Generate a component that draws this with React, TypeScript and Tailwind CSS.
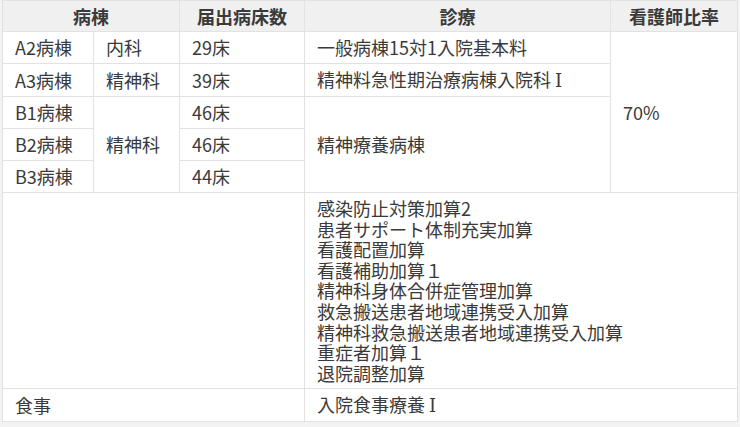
import React from "react";

const td = "border border-[#e2e2e2] px-[12px] py-[5px] align-middle";
const th = "border border-[#e2e2e2] px-[12px] py-0 text-center font-bold bg-[#f0f0f0]";

const additions = [
  "感染防止対策加算2",
  "患者サポート体制充実加算",
  "看護配置加算",
  "看護補助加算１",
  "精神科身体合併症管理加算",
  "救急搬送患者地域連携受入加算",
  "精神科救急搬送患者地域連携受入加算",
  "重症者加算１",
  "退院調整加算",
];

function RomanOne() {
  return (
    <span className="ml-[4px]" style={{ fontFamily: '"DejaVu Serif", "Liberation Serif", serif' }}>
      Ⅰ
    </span>
  );
}

export default function App() {
  return (
    <div
      className="w-[740px] h-[427px] bg-[#f3f3f3] pl-[2px] overflow-hidden text-[#3a3a3a] text-[18px] leading-[21px]"
      style={{ fontFamily: '"Noto Sans CJK JP", "Noto Sans", sans-serif' }}
    >
      <table className="w-[735px] border-collapse bg-white table-fixed">
        <colgroup>
          <col className="w-[91px]" />
          <col className="w-[86px]" />
          <col className="w-[125px]" />
          <col className="w-[306px]" />
          <col className="w-[127px]" />
        </colgroup>
        <thead>
          <tr className="h-[31px]">
            <th colSpan={2} className={th}>病棟</th>
            <th className={th}>届出病床数</th>
            <th className={th}>診療</th>
            <th className={th}>看護師比率</th>
          </tr>
        </thead>
        <tbody>
          <tr>
            <td className={td}>A2病棟</td>
            <td className={td}>内科</td>
            <td className={td}>29床</td>
            <td className={td}>一般病棟15対1入院基本料</td>
            <td rowSpan={5} className={td}>70%</td>
          </tr>
          <tr>
            <td className={td}>A3病棟</td>
            <td className={td}>精神科</td>
            <td className={td}>39床</td>
            <td className={td}>
              精神料急性期治療病棟入院科<RomanOne />
            </td>
          </tr>
          <tr>
            <td className={td}>B1病棟</td>
            <td rowSpan={3} className={td}>精神科</td>
            <td className={td}>46床</td>
            <td rowSpan={3} className={td}>精神療養病棟</td>
          </tr>
          <tr>
            <td className={td}>B2病棟</td>
            <td className={td}>46床</td>
          </tr>
          <tr>
            <td className={td}>B3病棟</td>
            <td className={td}>44床</td>
          </tr>
          <tr>
            <td colSpan={3} className={td}></td>
            <td colSpan={2} className={td}>
              {additions.map((a) => (
                <div key={a} className="h-[20.6px] leading-[20.6px] whitespace-nowrap">
                  {a}
                </div>
              ))}
            </td>
          </tr>
          <tr>
            <td colSpan={3} className={td}>食事</td>
            <td colSpan={2} className={td}>
              入院食事療養<RomanOne />
            </td>
          </tr>
        </tbody>
      </table>
    </div>
  );
}
